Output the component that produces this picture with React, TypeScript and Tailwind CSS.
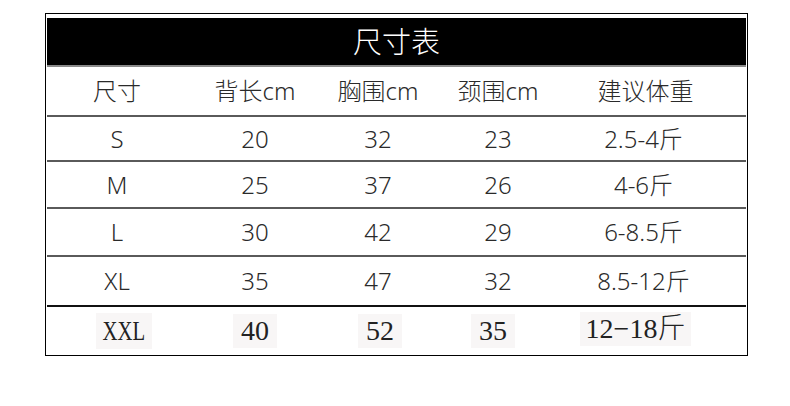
const HEADERS = ['尺寸', '背长cm', '胸围cm', '颈围cm', '建议体重'];

const ROWS = [
  { cells: ['S', '20', '32', '23', '2.5-4斤'], h: 'h-[45px]', line: 'border-[#5a5a5a] border-b-2' },
  { cells: ['M', '25', '37', '26', '4-6斤'], h: 'h-[47px]', line: 'border-[#5a5a5a] border-b-2' },
  { cells: ['L', '30', '42', '29', '6-8.5斤'], h: 'h-[48px]', line: 'border-[#5a5a5a] border-b-2' },
  { cells: ['XL', '35', '47', '32', '8.5-12斤'], h: 'h-[50px]', line: 'border-[#111] border-b-2' },
];

const grid = 'grid grid-cols-[140px_136px_110px_130px_1fr] items-center';

export default function App() {
  return (
    <div className="w-[790px] h-[406px] bg-white pt-[13px] pl-[45px]" style={{ fontFamily: '"Noto Sans", "Noto Sans CJK SC", sans-serif' }}>
      <div className="w-[703px] border border-black pt-[4px] px-[1px]">
        {/* title */}
        <div className="h-[47px] bg-black flex items-center justify-center">
          <span className="text-[29px] leading-none text-white font-light pb-[2px]" style={{ fontFamily: '"Noto Sans CJK SC", sans-serif' }}>
            尺寸表
          </span>
        </div>
        <div className="h-[2px] bg-[#8a8a8a]" />

        {/* header */}
        <div className={`${grid} h-[50px] border-b-2 border-[#5a5a5a] text-[24px] font-light text-[#2a2a2a]`}>
          {HEADERS.map((t, i) => (
            <div key={t} className={`text-center ${i === 4 ? 'pr-[18px]' : ''}`}>
              {t}
            </div>
          ))}
        </div>

        {ROWS.map((r) => (
          <div key={r.cells[0]} className={`${grid} ${r.h} ${r.line} text-[24px] font-light text-[#2a2a2a]`}>
            {r.cells.map((t, i) => (
              <div key={i} className={`text-center ${i === 4 ? 'pr-[22px]' : ''}`}>
                {t}
              </div>
            ))}
          </div>
        ))}

        {/* last row, different typeface in the source */}
        <div className={`${grid} h-[48px] text-[28px] text-[#222]`} style={{ fontFamily: '"Liberation Serif", "Noto Sans CJK SC", serif' }}>
          <div className="flex justify-center pl-[14px]">
            <span className="bg-[#f8f6f6] px-[6px] py-[1px] leading-[34px] inline-block">
              <span className="inline-block scale-x-[0.74] origin-center -mx-[7px]">XXL</span>
            </span>
          </div>
          <div className="flex justify-center">
            <span className="bg-[#f8f6f6] px-[8px] leading-[34px]">40</span>
          </div>
          <div className="flex justify-center pl-[4px]">
            <span className="bg-[#f8f6f6] px-[8px] leading-[34px]">52</span>
          </div>
          <div className="flex justify-center pr-[10px]">
            <span className="bg-[#f8f6f6] px-[8px] leading-[34px]">35</span>
          </div>
          <div className="flex justify-center pr-[38px]">
            <span className="bg-[#f8f6f6] px-[6px] leading-[34px] -mt-[4px]">
              12−18<span className="font-light">斤</span>
            </span>
          </div>
        </div>
      </div>
    </div>
  );
}
